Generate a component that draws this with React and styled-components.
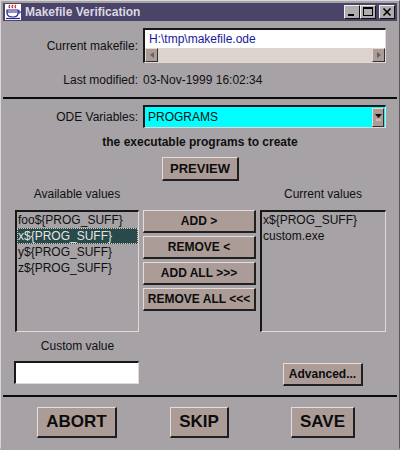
import React from "react";
import styled, { createGlobalStyle } from "styled-components";

const GlobalStyle = createGlobalStyle`
  html, body { margin: 0; padding: 0; background: #a6a2a6; }
  body {
    font-family: "Liberation Sans", Arial, sans-serif;
    font-size: 12px;
    color: #101010;
  }
  * { box-sizing: border-box; }
`;

const Window = styled.div`
  width: 400px;
  height: 450px;
  background: #a6a2a6;
  border-style: solid;
  border-width: 1px 1px 3px 1px;
  border-color: #d8d4d8 #5a565a #a6a2a6 #d8d4d8;
  padding: 2px 2px 0 2px;
  display: flex;
  flex-direction: column;
`;

const TitleBar = styled.div`
  height: 18px;
  background: #4a4468;
  display: flex;
  align-items: center;
  padding: 0 2px 0 2px;
  flex-shrink: 0;
`;

const TitleText = styled.span`
  font-weight: bold;
  font-size: 12px;
  color: #dcd8e4;
  margin-left: 4px;
`;

const TitleButtons = styled.div`
  margin-left: auto;
  display: flex;
  align-items: center;
`;

const CaptionButton = styled.div`
  width: 16px;
  height: 14px;
  background: #b0acb0;
  border-style: solid;
  border-width: 1px;
  border-color: #f0f0f0 #101010 #101010 #f0f0f0;
  display: flex;
  align-items: center;
  justify-content: center;
  margin-left: ${(p) => (p.$gap ? "3px" : "0")};
`;

const Body = styled.div`
  flex: 1;
  display: flex;
  flex-direction: column;
`;

const FormRow = styled.div`
  display: flex;
  align-items: center;
  height: ${(p) => p.$h}px;
  margin-top: ${(p) => p.$mt}px;
`;

const Label = styled.div`
  width: 135px;
  text-align: right;
  flex-shrink: 0;
`;

const Value = styled.div`
  margin-left: 5px;
`;

const Sunken = styled.div`
  border-style: solid;
  border-width: 2px 1px 1px 2px;
  border-color: #181818 #e4d8d4 #e4d8d4 #181818;
`;

const PathField = styled(Sunken)`
  margin-left: 5px;
  width: 243px;
  height: 35px;
  background: #ffffff;
  display: flex;
  flex-direction: column;
`;

const PathText = styled.div`
  flex: 1;
  color: #18189c;
  padding-left: 4px;
  line-height: 18px;
`;

const HScroll = styled.div`
  height: 14px;
  background: #dcd2ce;
  display: flex;
  justify-content: space-between;
`;

const ArrowButton = styled.div`
  width: 13px;
  height: 14px;
  background: #ac9c98;
  border-style: solid;
  border-width: 1px;
  border-color: #e4d8d4 #303030 #303030 #e4d8d4;
  display: flex;
  align-items: center;
  justify-content: center;
`;

const Separator = styled.div`
  height: 2px;
  background: #0c0c0c;
  margin-top: ${(p) => p.$mt}px;
  flex-shrink: 0;
`;

const Combo = styled(Sunken)`
  margin-left: 5px;
  width: 243px;
  height: 23px;
  background: #00ffff;
  display: flex;
  align-items: center;
  padding-left: 3px;
  padding-right: 1px;
`;

const ComboText = styled.span`
  flex: 1;
`;

const DropButton = styled.div`
  width: 12px;
  height: 19px;
  background: #ac9c98;
  border-style: solid;
  border-width: 1px;
  border-color: #e4d8d4 #303030 #303030 #e4d8d4;
  display: flex;
  align-items: center;
  justify-content: center;
`;

const Description = styled.div`
  margin-top: 6px;
  text-align: center;
  font-weight: bold;
  line-height: 17px;
`;

const Button = styled.button`
  font-family: "Liberation Sans", Arial, sans-serif;
  font-weight: bold;
  font-size: ${(p) => p.$size || 12}px;
  color: #0c0c0c;
  background: #ac9c98;
  border-style: solid;
  border-width: 1px 2px 2px 1px;
  border-color: #e8dcd8 #202020 #202020 #e8dcd8;
  padding: 0 ${(p) => p.$px ?? 5}px;
  height: ${(p) => p.$h || 23}px;
  white-space: nowrap;
  margin: 0;
  cursor: default;
`;

const PreviewWrap = styled.div`
  display: flex;
  justify-content: center;
  margin-top: 6px;
  padding-left: 1px;
`;

const Columns = styled.div`
  display: grid;
  grid-template-columns: 124px 113px 126px;
  column-gap: 4px;
  padding-left: 12px;
  margin-top: ${(p) => p.$mt || 0}px;
  align-items: ${(p) => p.$align || "stretch"};
`;

const ColumnTitle = styled.div`
  text-align: center;
  line-height: 15px;
  grid-column: ${(p) => p.$col};
`;

const List = styled(Sunken)`
  height: 122px;
  background: #a6a2a6;
`;

const ListItem = styled.div`
  line-height: 16px;
  height: 16px;
  padding-left: 1px;
  white-space: nowrap;
  background: ${(p) => (p.$selected ? "#284a4a" : "transparent")};
  color: ${(p) => (p.$selected ? "#e4e4e4" : "#101010")};
  outline: ${(p) => (p.$selected ? "1px dotted #d8c8b8" : "none")};
  outline-offset: -1px;
`;

const ButtonStack = styled.div`
  display: flex;
  flex-direction: column;
  gap: 3px;

  & > button { padding: 0; }
`;

const CustomColumn = styled.div`
  display: flex;
  flex-direction: column;
  align-items: stretch;
`;

const CustomLabel = styled.div`
  text-align: center;
  line-height: 15px;
  padding-left: 1px;
`;

const TextInput = styled(Sunken)`
  margin-top: 7px;
  height: 23px;
  background: #ffffff;
  margin-bottom: 2px;
  margin-left: -1px;
`;

const Cell = styled.div`
  display: flex;
  justify-content: center;
  grid-column: ${(p) => p.$col};
`;

function AppIcon() {
  return (
    <svg width="16" height="16" viewBox="0 0 16 16">
      <rect x="0" y="0" width="16" height="16" fill="#ffffff" />
      <path d="M5 1 q-2 2 0 3 M8 1 q-2 2 0 3 M11 1 q-2 2 0 3" stroke="#d02020" fill="none" strokeWidth="1.2" />
      <path d="M2 6 h11 v3 q0 4 -5 4 q-6 0 -6 -4 z" fill="none" stroke="#202090" strokeWidth="1.2" />
      <path d="M13 7 h2 v2 h-2" fill="none" stroke="#202090" strokeWidth="1" />
      <path d="M2 8 h10" stroke="#202090" strokeWidth="1" />
      <path d="M1 14.5 h14" stroke="#202090" strokeWidth="1.2" />
    </svg>
  );
}

function Tri({ dir }) {
  const pts = dir === "left" ? "5,1 1,4 5,7" : dir === "right" ? "1,1 5,4 1,7" : "0,1 7,1 3.5,5";
  const w = dir === "down" ? 7 : 6;
  return (
    <svg width={w} height="8" viewBox={`0 0 ${w} 8`}>
      <polygon points={pts} fill={dir === "down" ? "#101010" : "#6a6262"} />
      {dir === "down" && <rect x="1" y="6.5" width="5" height="1" fill="#e8dcd8" />}
    </svg>
  );
}

const available = ["foo${PROG_SUFF}", "x${PROG_SUFF}", "y${PROG_SUFF}", "z${PROG_SUFF}"];
const current = ["x${PROG_SUFF}", "custom.exe"];

export default function App() {
  return (
    <>
      <GlobalStyle />
      <Window>
        <TitleBar>
          <AppIcon />
          <TitleText>Makefile Verification</TitleText>
          <TitleButtons>
            <CaptionButton>
              <svg width="10" height="10" viewBox="0 0 10 10">
                <rect x="1" y="7" width="6" height="2" fill="#000" />
              </svg>
            </CaptionButton>
            <CaptionButton>
              <svg width="10" height="10" viewBox="0 0 10 10">
                <rect x="0.5" y="0.5" width="9" height="8" fill="none" stroke="#000" />
                <rect x="0" y="0" width="10" height="2" fill="#000" />
              </svg>
            </CaptionButton>
            <CaptionButton $gap>
              <svg width="10" height="10" viewBox="0 0 10 10">
                <path d="M1.5 1.5 L8.5 8.5 M8.5 1.5 L1.5 8.5" stroke="#000" strokeWidth="1.6" />
              </svg>
            </CaptionButton>
          </TitleButtons>
        </TitleBar>

        <Body>
          <FormRow $h={35} $mt={7}>
            <Label>Current makefile:</Label>
            <PathField>
              <PathText>H:\tmp\makefile.ode</PathText>
              <HScroll>
                <ArrowButton><Tri dir="left" /></ArrowButton>
                <ArrowButton><Tri dir="right" /></ArrowButton>
              </HScroll>
            </PathField>
          </FormRow>

          <FormRow $h={20} $mt={7}>
            <Label>Last modified:</Label>
            <Value>03-Nov-1999 16:02:34</Value>
          </FormRow>

          <Separator $mt={7} />

          <FormRow $h={23} $mt={6}>
            <Label>ODE Variables:</Label>
            <Combo>
              <ComboText>PROGRAMS</ComboText>
              <DropButton><Tri dir="down" /></DropButton>
            </Combo>
          </FormRow>

          <Description>the executable programs to create</Description>

          <PreviewWrap>
            <Button $size={13} $h={24} $px={7}>PREVIEW</Button>
          </PreviewWrap>

          <Columns $mt={6}>
            <ColumnTitle $col={1}>Available values</ColumnTitle>
            <ColumnTitle $col={3}>Current values</ColumnTitle>
          </Columns>

          <Columns $mt={8}>
            <List>
              {available.map((v, i) => (
                <ListItem key={v} $selected={i === 1}>{v}</ListItem>
              ))}
            </List>
            <ButtonStack>
              <Button>ADD &gt;</Button>
              <Button>REMOVE &lt;</Button>
              <Button>ADD ALL &gt;&gt;&gt;</Button>
              <Button>REMOVE ALL &lt;&lt;&lt;</Button>
            </ButtonStack>
            <List>
              {current.map((v) => (
                <ListItem key={v}>{v}</ListItem>
              ))}
            </List>
          </Columns>

          <Columns $mt={7} $align="end">
            <CustomColumn>
              <CustomLabel>Custom value</CustomLabel>
              <TextInput />
            </CustomColumn>
            <Cell $col={3}>
              <Button>Advanced...</Button>
            </Cell>
          </Columns>

          <Separator $mt={9} />

          <Columns $mt={10}>
            <Cell $col={1}>
              <Button $size={17} $h={31} $px={8}>ABORT</Button>
            </Cell>
            <Cell $col={2}>
              <Button $size={17} $h={31} $px={8}>SKIP</Button>
            </Cell>
            <Cell $col={3}>
              <Button $size={17} $h={31} $px={8}>SAVE</Button>
            </Cell>
          </Columns>
        </Body>
      </Window>
    </>
  );
}
